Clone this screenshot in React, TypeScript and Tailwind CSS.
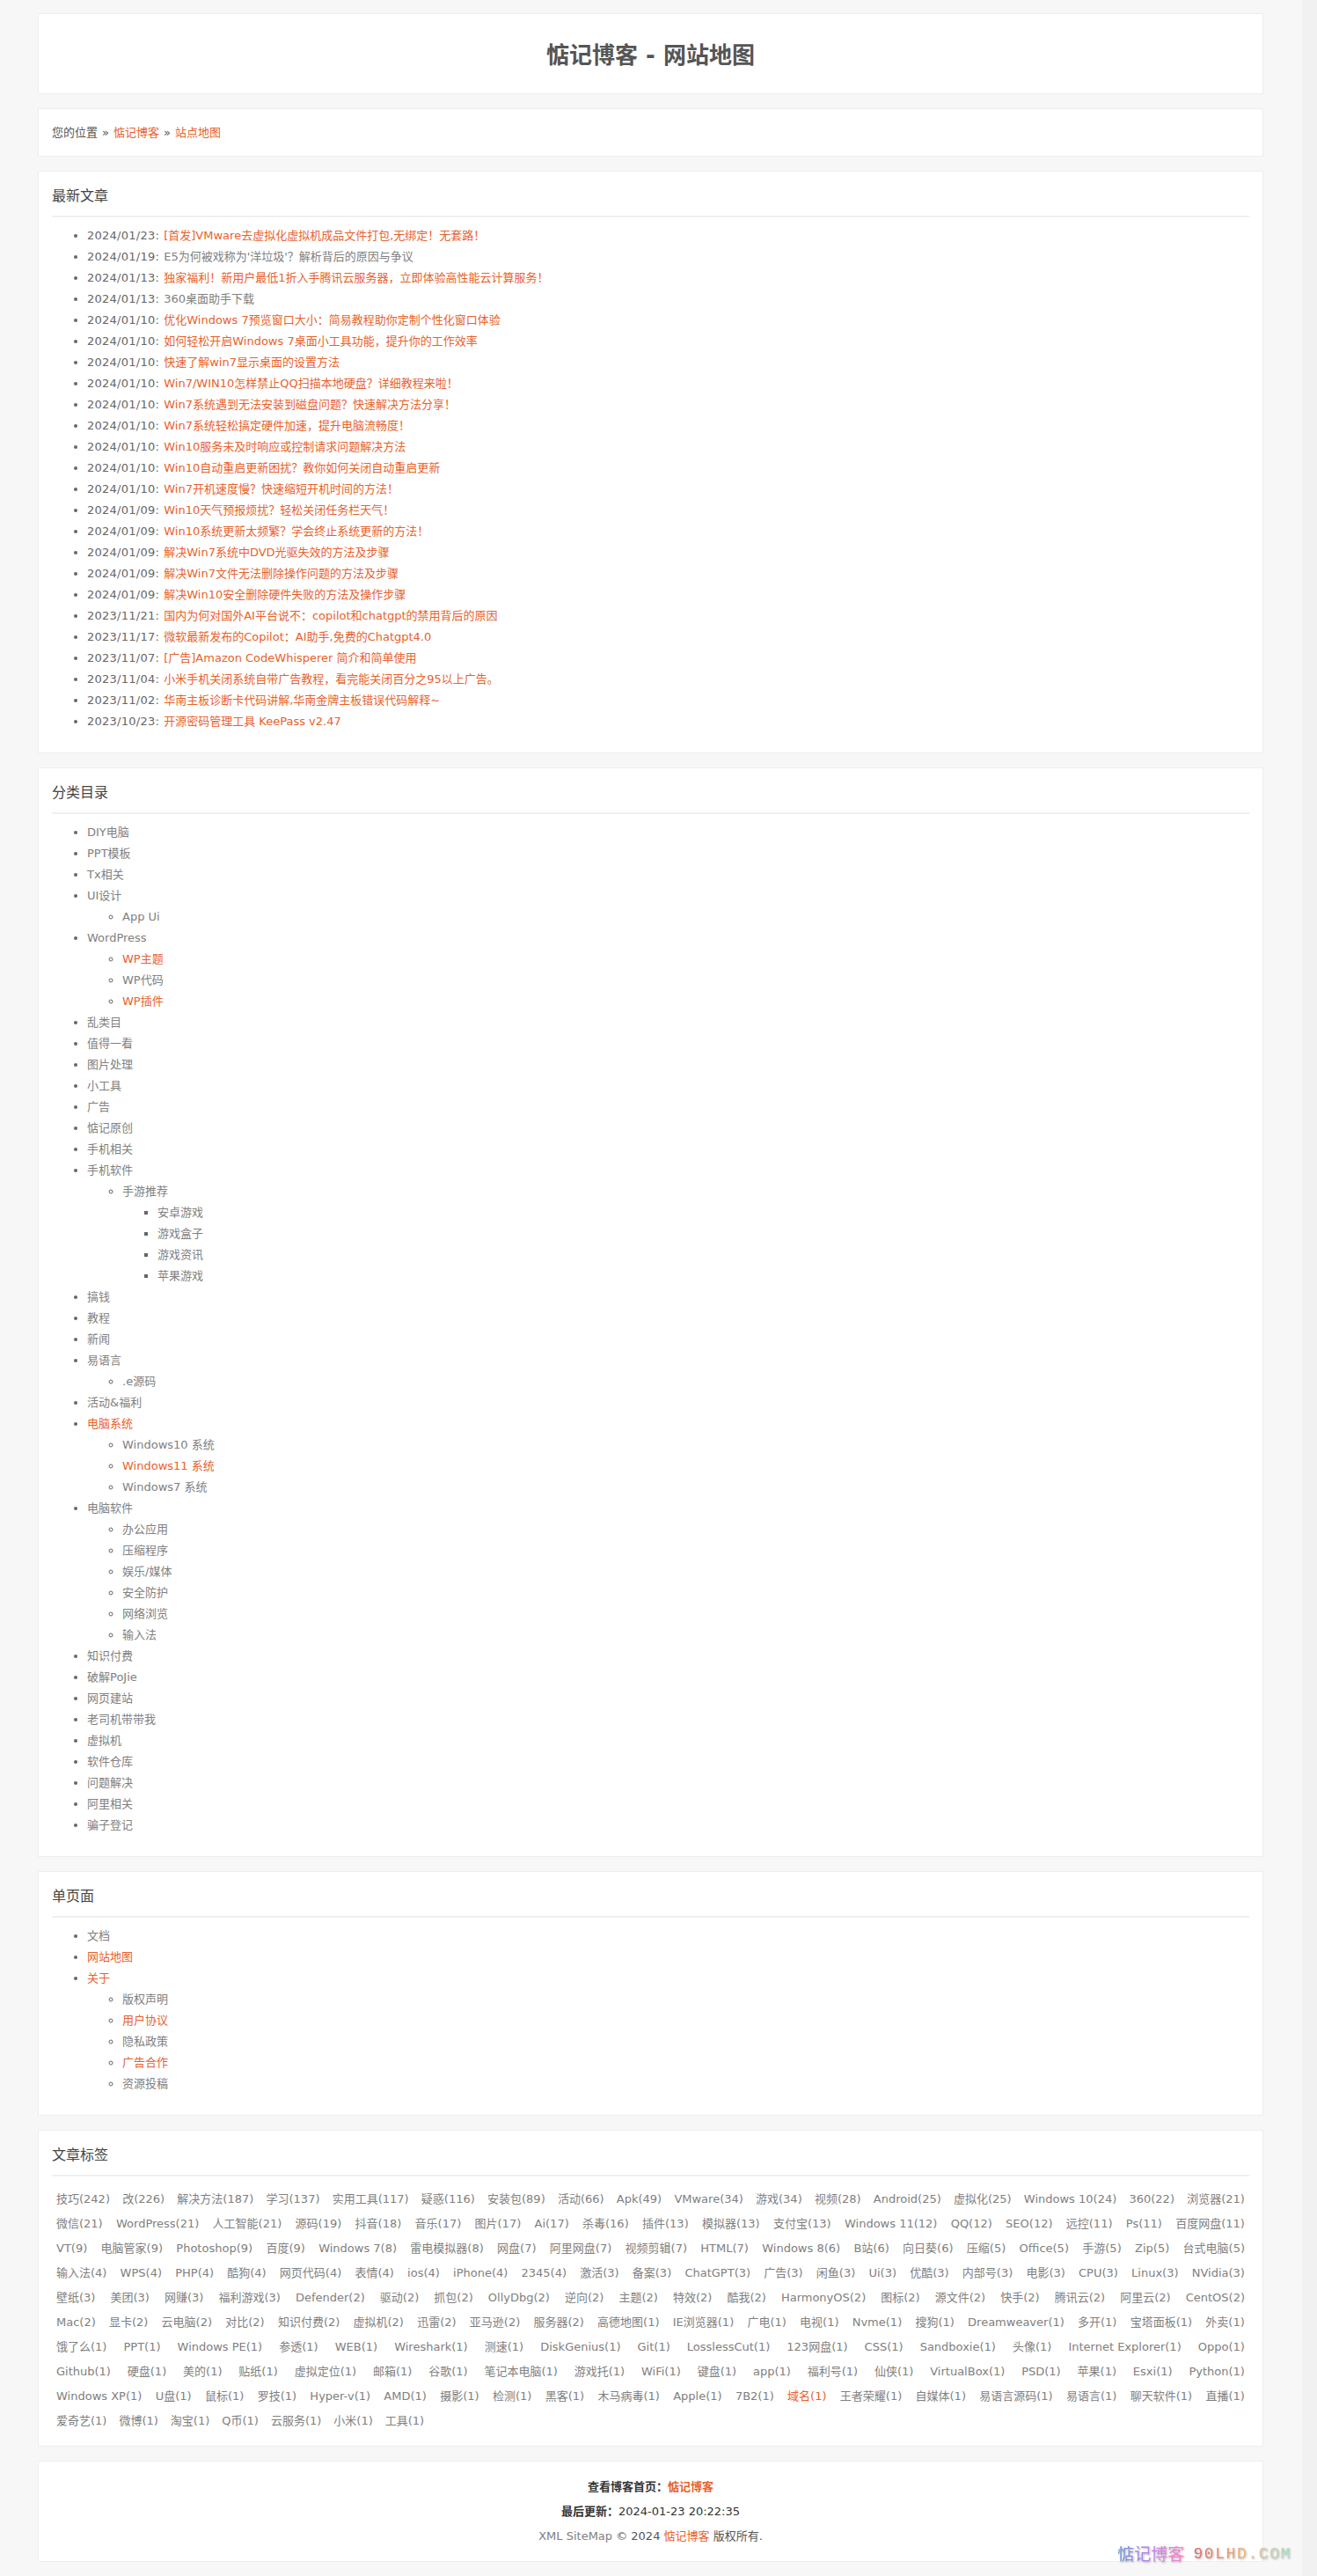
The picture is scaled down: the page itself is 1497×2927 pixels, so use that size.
import React from 'react';

const ORANGE = 'text-[#e8622c]';
const GRAY = 'text-[#808080]';

type Node = { t: string; hot?: boolean; kids?: Node[] };

const posts: [string, string, boolean][] = [
  ['2024/01/23', '[首发]VMware去虚拟化虚拟机成品文件打包,无绑定！无套路！', true],
  ['2024/01/19', 'E5为何被戏称为\'洋垃圾\'？解析背后的原因与争议', false],
  ['2024/01/13', '独家福利！新用户最低1折入手腾讯云服务器，立即体验高性能云计算服务！', true],
  ['2024/01/13', '360桌面助手下载', false],
  ['2024/01/10', '优化Windows 7预览窗口大小：简易教程助你定制个性化窗口体验', true],
  ['2024/01/10', '如何轻松开启Windows 7桌面小工具功能，提升你的工作效率', true],
  ['2024/01/10', '快速了解win7显示桌面的设置方法', true],
  ['2024/01/10', 'Win7/WIN10怎样禁止QQ扫描本地硬盘？详细教程来啦！', true],
  ['2024/01/10', 'Win7系统遇到无法安装到磁盘问题？快速解决方法分享！', true],
  ['2024/01/10', 'Win7系统轻松搞定硬件加速，提升电脑流畅度！', true],
  ['2024/01/10', 'Win10服务未及时响应或控制请求问题解决方法', true],
  ['2024/01/10', 'Win10自动重启更新困扰？教你如何关闭自动重启更新', true],
  ['2024/01/10', 'Win7开机速度慢？快速缩短开机时间的方法！', true],
  ['2024/01/09', 'Win10天气预报烦扰？轻松关闭任务栏天气！', true],
  ['2024/01/09', 'Win10系统更新太频繁？学会终止系统更新的方法！', true],
  ['2024/01/09', '解决Win7系统中DVD光驱失效的方法及步骤', true],
  ['2024/01/09', '解决Win7文件无法删除操作问题的方法及步骤', true],
  ['2024/01/09', '解决Win10安全删除硬件失败的方法及操作步骤', true],
  ['2023/11/21', '国内为何对国外AI平台说不：copilot和chatgpt的禁用背后的原因', true],
  ['2023/11/17', '微软最新发布的Copilot：AI助手,免费的Chatgpt4.0', true],
  ['2023/11/07', '[广告]Amazon CodeWhisperer 简介和简单使用', true],
  ['2023/11/04', '小米手机关闭系统自带广告教程，看完能关闭百分之95以上广告。', true],
  ['2023/11/02', '华南主板诊断卡代码讲解,华南金牌主板错误代码解释~', true],
  ['2023/10/23', '开源密码管理工具 KeePass v2.47', true],
];

const cats: Node[] = [
  { t: 'DIY电脑' },
  { t: 'PPT模板' },
  { t: 'Tx相关' },
  { t: 'UI设计', kids: [{ t: 'App Ui' }] },
  { t: 'WordPress', kids: [{ t: 'WP主题', hot: true }, { t: 'WP代码' }, { t: 'WP插件', hot: true }] },
  { t: '乱类目' },
  { t: '值得一看' },
  { t: '图片处理' },
  { t: '小工具' },
  { t: '广告' },
  { t: '惦记原创' },
  { t: '手机相关' },
  {
    t: '手机软件',
    kids: [{ t: '手游推荐', kids: [{ t: '安卓游戏' }, { t: '游戏盒子' }, { t: '游戏资讯' }, { t: '苹果游戏' }] }],
  },
  { t: '搞钱' },
  { t: '教程' },
  { t: '新闻' },
  { t: '易语言', kids: [{ t: '.e源码' }] },
  { t: '活动&福利' },
  {
    t: '电脑系统',
    hot: true,
    kids: [{ t: 'Windows10 系统' }, { t: 'Windows11 系统', hot: true }, { t: 'Windows7 系统' }],
  },
  {
    t: '电脑软件',
    kids: [{ t: '办公应用' }, { t: '压缩程序' }, { t: '娱乐/媒体' }, { t: '安全防护' }, { t: '网络浏览' }, { t: '输入法' }],
  },
  { t: '知识付费' },
  { t: '破解PoJie' },
  { t: '网页建站' },
  { t: '老司机带带我' },
  { t: '虚拟机' },
  { t: '软件仓库' },
  { t: '问题解决' },
  { t: '阿里相关' },
  { t: '骗子登记' },
];

const pages: Node[] = [
  { t: '文档' },
  { t: '网站地图', hot: true },
  {
    t: '关于',
    hot: true,
    kids: [{ t: '版权声明' }, { t: '用户协议', hot: true }, { t: '隐私政策' }, { t: '广告合作', hot: true }, { t: '资源投稿' }],
  },
];

const tagRows = [
  '技巧(242) 改(226) 解决方法(187) 学习(137) 实用工具(117) 疑惑(116) 安装包(89) 活动(66) Apk(49) VMware(34) 游戏(34) 视频(28) Android(25) 虚拟化(25) Windows_10(24) 360(22) 浏览器(21)',
  '微信(21) WordPress(21) 人工智能(21) 源码(19) 抖音(18) 音乐(17) 图片(17) Ai(17) 杀毒(16) 插件(13) 模拟器(13) 支付宝(13) Windows_11(12) QQ(12) SEO(12) 远控(11) Ps(11) 百度网盘(11)',
  'VT(9) 电脑管家(9) Photoshop(9) 百度(9) Windows_7(8) 雷电模拟器(8) 网盘(7) 阿里网盘(7) 视频剪辑(7) HTML(7) Windows_8(6) B站(6) 向日葵(6) 压缩(5) Office(5) 手游(5) Zip(5) 台式电脑(5)',
  '输入法(4) WPS(4) PHP(4) 酷狗(4) 网页代码(4) 表情(4) ios(4) iPhone(4) 2345(4) 激活(3) 备案(3) ChatGPT(3) 广告(3) 闲鱼(3) Ui(3) 优酷(3) 内部号(3) 电影(3) CPU(3) Linux(3) NVidia(3)',
  '壁纸(3) 美团(3) 网赚(3) 福利游戏(3) Defender(2) 驱动(2) 抓包(2) OllyDbg(2) 逆向(2) 主题(2) 特效(2) 酷我(2) HarmonyOS(2) 图标(2) 源文件(2) 快手(2) 腾讯云(2) 阿里云(2) CentOS(2)',
  'Mac(2) 显卡(2) 云电脑(2) 对比(2) 知识付费(2) 虚拟机(2) 迅雷(2) 亚马逊(2) 服务器(2) 高德地图(1) IE浏览器(1) 广电(1) 电视(1) Nvme(1) 搜狗(1) Dreamweaver(1) 多开(1) 宝塔面板(1) 外卖(1)',
  '饿了么(1) PPT(1) Windows_PE(1) 参透(1) WEB(1) Wireshark(1) 测速(1) DiskGenius(1) Git(1) LosslessCut(1) 123网盘(1) CSS(1) Sandboxie(1) 头像(1) Internet_Explorer(1) Oppo(1)',
  'Github(1) 硬盘(1) 美的(1) 贴纸(1) 虚拟定位(1) 邮箱(1) 谷歌(1) 笔记本电脑(1) 游戏托(1) WiFi(1) 键盘(1) app(1) 福利号(1) 仙侠(1) VirtualBox(1) PSD(1) 苹果(1) Esxi(1) Python(1)',
  'Windows_XP(1) U盘(1) 鼠标(1) 罗技(1) Hyper-v(1) AMD(1) 摄影(1) 检测(1) 黑客(1) 木马病毒(1) Apple(1) 7B2(1) 域名(1) 王者荣耀(1) 自媒体(1) 易语言源码(1) 易语言(1) 聊天软件(1) 直播(1)',
];
const lastRow = '爱奇艺(1) 微博(1) 淘宝(1) Q币(1) 云服务(1) 小米(1) 工具(1)';

const Card = ({ className = '', children }: { className?: string; children: React.ReactNode }) => (
  <div className={`bg-white border border-[#eeeeee] ${className}`}>{children}</div>
);

const Section = ({ title, children }: { title: string; children: React.ReactNode }) => (
  <Card className="px-[15px] pt-[15px]">
    <h2 className="text-[16px] leading-[25px] h-[37px] border-b-2 border-[#f0f0f0] text-[#444] font-normal">{title}</h2>
    {children}
  </Card>
);

// nested list, bullet type changes per depth
const Tree = ({ items, depth }: { items: Node[]; depth: number }) => (
  <ul className={`pl-10 ${depth === 0 ? 'list-disc' : depth === 1 ? 'list-[circle]' : 'list-[square]'}`}>
    {items.map((n) => (
      <li key={n.t} className="leading-[24px]">
        <a className={n.hot ? ORANGE : GRAY}>{n.t}</a>
        {n.kids && <Tree items={n.kids} depth={depth + 1} />}
      </li>
    ))}
  </ul>
);

export default function App() {
  return (
    <div className="flex h-[2927px] bg-[#f7f7f7] text-[13px] text-[#666] font-['DejaVu_Sans','Noto_Sans_CJK_SC',sans-serif]">
      <div className="relative flex-1 min-w-0 pl-[43px] pr-[44px] pt-[15px] flex flex-col gap-4">
        <Card className="h-[92px] pt-[4px] flex items-center justify-center">
          <h1 className="text-[26px] font-bold text-[#555]">惦记博客 - 网站地图</h1>
        </Card>

        <Card className="h-[55px] flex items-center px-[15px] gap-[5px] text-[#555]">
          <span>您的位置</span>
          <span>»</span>
          <a className={ORANGE}>惦记博客</a>
          <span>»</span>
          <a className={ORANGE}>站点地图</a>
        </Card>

        <Section title="最新文章">
          <ul className="list-disc pl-10 pt-[9px] pb-[23px]">
            {posts.map(([date, title, hot]) => (
              <li key={title} className="leading-[24px]">
                <span className="tracking-[0.25px] mr-[1px]">{date}:</span> <a className={hot ? ORANGE : GRAY}>{title}</a>
              </li>
            ))}
          </ul>
        </Section>

        <Section title="分类目录">
          <div className="pt-[9px] pb-[23px]">
            <Tree items={cats} depth={0} />
          </div>
        </Section>

        <Section title="单页面">
          <div className="pt-[9px] pb-[23px]">
            <Tree items={pages} depth={0} />
          </div>
        </Section>

        <Section title="文章标签">
          <div className="pt-[12px] pb-[14px] text-[#808080]">
            {tagRows.map((row) => (
              <div key={row} className="flex justify-between h-[28px] leading-[28px]">
                {row.split(' ').map((tag) => (
                  <a key={tag} className={`px-[5px] whitespace-pre ${tag === '域名(1)' ? ORANGE : ''}`}>
                    {tag.replace('_', ' ')}
                  </a>
                ))}
              </div>
            ))}
            <div className="flex gap-[4px] h-[28px] leading-[28px]">
              {lastRow.split(' ').map((tag) => (
                <a key={tag} className="px-[5px]">{tag}</a>
              ))}
            </div>
          </div>
        </Section>

        <Card className="h-[115px] flex flex-col items-center justify-center leading-[28px] text-[#555]">
          <div className="text-[#333]">
            <span className="font-bold">查看博客首页：</span><a className={`${ORANGE} font-bold`}>惦记博客</a>
          </div>
          <div className="text-[#333]">
            <span className="font-bold">最后更新：</span>2024-01-23 20:22:35
          </div>
          <div>
            <a className={GRAY}>XML SiteMap</a> © 2024 <a className={ORANGE}>惦记博客</a> 版权所有.
          </div>
        </Card>

        {/* site watermark laid over the page corner */}
        <div className="absolute right-[12px] bottom-[16px] h-[18px] flex items-center gap-[10px] leading-[18px] whitespace-pre drop-shadow-[1px_1px_1px_rgba(0,0,0,0.3)]">
          <span className="text-[19px] bg-gradient-to-r from-[#5b8fd8] via-[#c080f0] to-[#ff80c0] bg-clip-text text-transparent">惦记博客</span>
          <span className="text-[18px] tracking-[1.6px] font-['Liberation_Mono',monospace] bg-gradient-to-r from-[#e06060] via-[#f0b070] to-[#a8e0c8] bg-clip-text text-transparent">90LHD.COM</span>
        </div>
      </div>
      <div className="w-[17px] shrink-0 bg-[#f1f1f1]" />
    </div>
  );
}
